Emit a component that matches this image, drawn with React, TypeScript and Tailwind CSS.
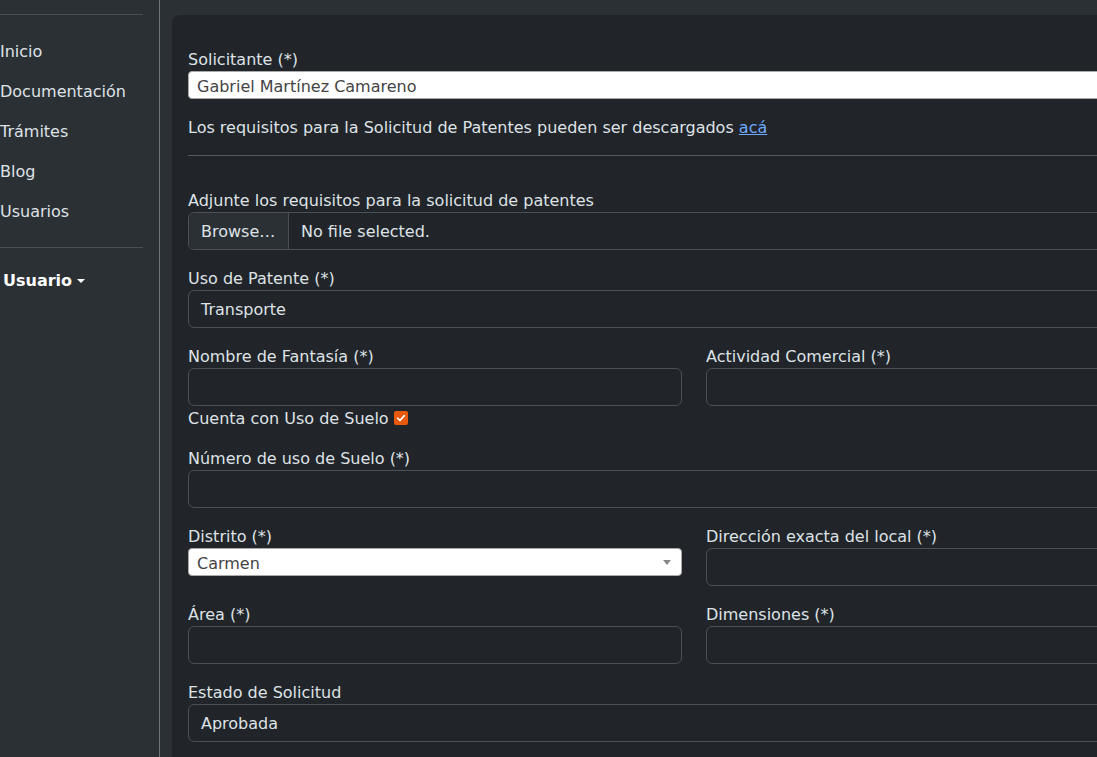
const font = { fontFamily: '"DejaVu Sans", "Noto Sans", sans-serif' };

const navItems = ['Inicio', 'Documentación', 'Trámites', 'Blog', 'Usuarios'];

function Label({ children }: { children: React.ReactNode }) {
  return <label className="block h-6 leading-[26px] text-[#dee2e6]">{children}</label>;
}

function TextInput({ value = '' }: { value?: string }) {
  return (
    <div className="h-[38px] rounded-md border border-[#495057] bg-[#212529] px-3 leading-[38px] text-[#dee2e6]">
      {value}
    </div>
  );
}

function Select2({ value, arrow = false }: { value: string; arrow?: boolean }) {
  return (
    <div className="relative h-[28px] rounded border border-[#aaa] bg-white pl-2 leading-[30px] text-[#444]">
      {value}
      {arrow ? (
        <span className="absolute right-[10px] top-[11px] h-0 w-0 border-x-4 border-t-[5px] border-x-transparent border-t-[#888]" />
      ) : null}
    </div>
  );
}

export default function App() {
  return (
    <div className="flex h-[757px] w-[1097px] overflow-hidden bg-[#2b3035] text-base" style={font}>
      <aside className="w-[160px] shrink-0 border-r border-[#6c757d] pr-4 pt-[14px]">
        <hr className="border-t border-[#495057]" />
        <ul className="my-4">
          {navItems.map((n) => (
            <li key={n} className="h-10 py-2 leading-[26px] text-[#dee2e6]">
              {n}
            </li>
          ))}
        </ul>
        <hr className="border-t border-[#495057]" />
        <div className="mt-[21px] flex items-center pl-[3px] font-bold leading-6 text-white">
          Usuario
          <span className="ml-[5px] h-0 w-0 border-x-4 border-t-4 border-x-transparent border-t-white" />
        </div>
      </aside>

      <main className="min-w-0 flex-1 pl-3 pt-[15px]">
        <div className="w-[1044px] rounded-tl-lg bg-[#212529] px-4 pt-8 pb-8">
          <Label>Solicitante (*)</Label>
          <Select2 value="Gabriel Martínez Camareno" />

          <p className="mt-4 h-6 leading-[26px] text-[#dee2e6]">
            Los requisitos para la Solicitud de Patentes pueden ser descargados{' '}
            <a href="#" className="text-[#6ea8fe] underline">
              acá
            </a>
          </p>
          <hr className="mt-4 border-t border-[#54575b]" />

          <div className="mt-8">
            <Label>Adjunte los requisitos para la solicitud de patentes</Label>
            <div className="flex h-[38px] overflow-hidden rounded-md border border-[#495057] text-[#dee2e6]">
              <span className="w-[100px] border-r border-[#495057] bg-[#2b3035] px-3 leading-[38px]">Browse…</span>
              <span className="px-3 leading-[38px]">No file selected.</span>
            </div>
          </div>

          <div className="mt-4">
            <Label>Uso de Patente (*)</Label>
            <TextInput value="Transporte" />
          </div>

          <div className="mt-4 grid grid-cols-2 gap-x-6">
            <div>
              <Label>Nombre de Fantasía (*)</Label>
              <TextInput />
              <div className="flex h-6 items-center leading-[26px] text-[#dee2e6]">
                <span className="pt-[2px]">Cuenta con Uso de Suelo</span>
                <span className="ml-[5px] flex h-[14px] w-[14px] items-center justify-center rounded-[2px] bg-[#e8590c]">
                  <svg viewBox="0 0 12 12" className="h-[10px] w-[10px]">
                    <path d="M2 6.3 4.8 9 10 3.2" fill="none" stroke="white" strokeWidth="2" strokeLinecap="round" strokeLinejoin="round" />
                  </svg>
                </span>
              </div>
            </div>
            <div>
              <Label>Actividad Comercial (*)</Label>
              <TextInput />
            </div>
          </div>

          <div className="mt-4">
            <Label>Número de uso de Suelo (*)</Label>
            <TextInput />
          </div>

          <div className="mt-4 grid grid-cols-2 gap-x-6">
            <div>
              <Label>Distrito (*)</Label>
              <Select2 value="Carmen" arrow />
            </div>
            <div>
              <Label>Dirección exacta del local (*)</Label>
              <TextInput />
            </div>
          </div>

          <div className="mt-4 grid grid-cols-2 gap-x-6">
            <div>
              <Label>Área (*)</Label>
              <TextInput />
            </div>
            <div>
              <Label>Dimensiones (*)</Label>
              <TextInput />
            </div>
          </div>

          <div className="mt-4">
            <Label>Estado de Solicitud</Label>
            <TextInput value="Aprobada" />
          </div>
        </div>
      </main>
    </div>
  );
}
